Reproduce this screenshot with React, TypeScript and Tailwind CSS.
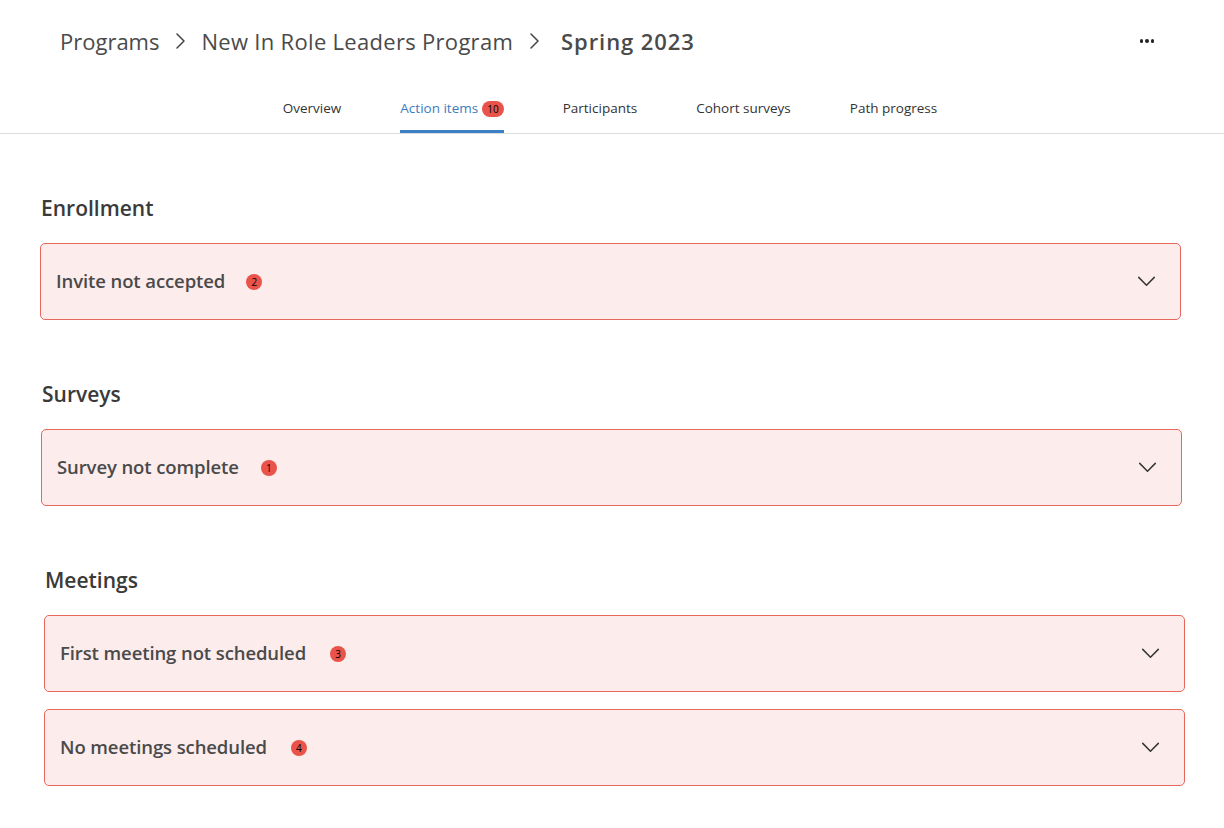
import React from 'react';

const font = { fontFamily: '"Open Sans", "Noto Sans", sans-serif' };

function Chevron({ className }: { className?: string }) {
  return (
    <svg viewBox="0 0 20 12" className={className} fill="none" stroke="currentColor" strokeWidth="1.6" strokeLinecap="round" strokeLinejoin="round">
      <path d="M1.5 1.5 10 10l8.5-8.5" />
    </svg>
  );
}

function Crumb() {
  return (
    <svg viewBox="0 0 10 18" className="w-[10px] h-[18px] text-[#444]" fill="none" stroke="currentColor" strokeWidth="1.5" strokeLinecap="round" strokeLinejoin="round">
      <path d="M2 2l7 7-7 7" />
    </svg>
  );
}

function Badge({ count }: { count: number }) {
  return (
    <span className="flex items-center justify-center w-4 h-4 rounded-full bg-[#e9534a] text-[10px] leading-none text-black">
      {count}
    </span>
  );
}

function ActionCard({ label, count, badgeGap }: { label: string; count: number; badgeGap: string }) {
  return (
    <div className="flex items-center h-[77px] px-[15px] border border-[#e8675d] bg-[#fcecec] rounded-[5px]">
      <span className="text-[18.5px] font-semibold text-[#4a4a4a] leading-none tracking-[-0.1px]">{label}</span>
      <span className={`flex ${badgeGap}`}><Badge count={count} /></span>
      <div className="ml-auto mr-[9px] text-[#333]">
        <Chevron className="w-[19px] h-[11px]" />
      </div>
    </div>
  );
}

function Section({ title, offset, children }: { title: string; offset: string; children: React.ReactNode }) {
  return (
    <section className={offset}>
      <h2 className="text-[21px] font-semibold text-[#3a3a3a] leading-[28px] mb-[21px] pl-px">{title}</h2>
      <div className="flex flex-col gap-[17px]">{children}</div>
    </section>
  );
}

const tabs = ['Overview', 'Action items', 'Participants', 'Cohort surveys', 'Path progress'];

export default function App() {
  return (
    <div className="w-[1224px] h-[828px] bg-white overflow-hidden" style={font}>
      <header className="flex items-center h-[84px] pl-[60px] pr-[70px] pb-[2px]">
        <nav className="flex items-center text-[22px] text-[#4a4a4a]">
          <span>Programs</span>
          <span className="mx-[16px]"><Crumb /></span>
          <span className="tracking-[0.3px]">New In Role Leaders Program</span>
          <span className="ml-[16px] mr-[22px]"><Crumb /></span>
          <span className="font-semibold tracking-[0.9px]">Spring 2023</span>
        </nav>
        <div className="ml-auto flex gap-[2px]">
          <span className="w-[3.5px] h-[3.5px] rounded-full bg-[#222]" />
          <span className="w-[3.5px] h-[3.5px] rounded-full bg-[#222]" />
          <span className="w-[3.5px] h-[3.5px] rounded-full bg-[#222]" />
        </div>
      </header>

      <div className="flex justify-center gap-[59px] border-b border-[#dcdcdc] h-[50px] pr-[4px]">
        {tabs.map((t) => {
          const active = t === 'Action items';
          return (
            <div
              key={t}
              className={`flex items-center gap-[4px] pt-[3px] text-[13.5px] ${active ? 'text-[#3b7dc0] border-b-[3px] border-[#3b7fc4]' : 'text-[#333] border-b-[3px] border-transparent'}`}
            >
              <span>{t}</span>
              {active && (
                <span className="inline-flex items-center justify-center h-4 px-[5px] rounded-full bg-[#e9534a] text-[10px] leading-none text-black">10</span>
              )}
            </div>
          );
        })}
      </div>

      <main className="pl-[40px] pr-[43px] pt-[60px] flex flex-col gap-[60px]">
        <Section title="Enrollment" offset="">
          <ActionCard label="Invite not accepted" count={2} badgeGap="ml-[21px]" />
        </Section>
        <Section title="Surveys" offset="ml-px mr-[-1px]">
          <ActionCard label="Survey not complete" count={1} badgeGap="ml-[22px]" />
        </Section>
        <Section title="Meetings" offset="ml-[4px] mr-[-4px]">
          <ActionCard label="First meeting not scheduled" count={3} badgeGap="ml-[24px]" />
          <ActionCard label="No meetings scheduled" count={4} badgeGap="ml-[24px]" />
        </Section>
      </main>
    </div>
  );
}
